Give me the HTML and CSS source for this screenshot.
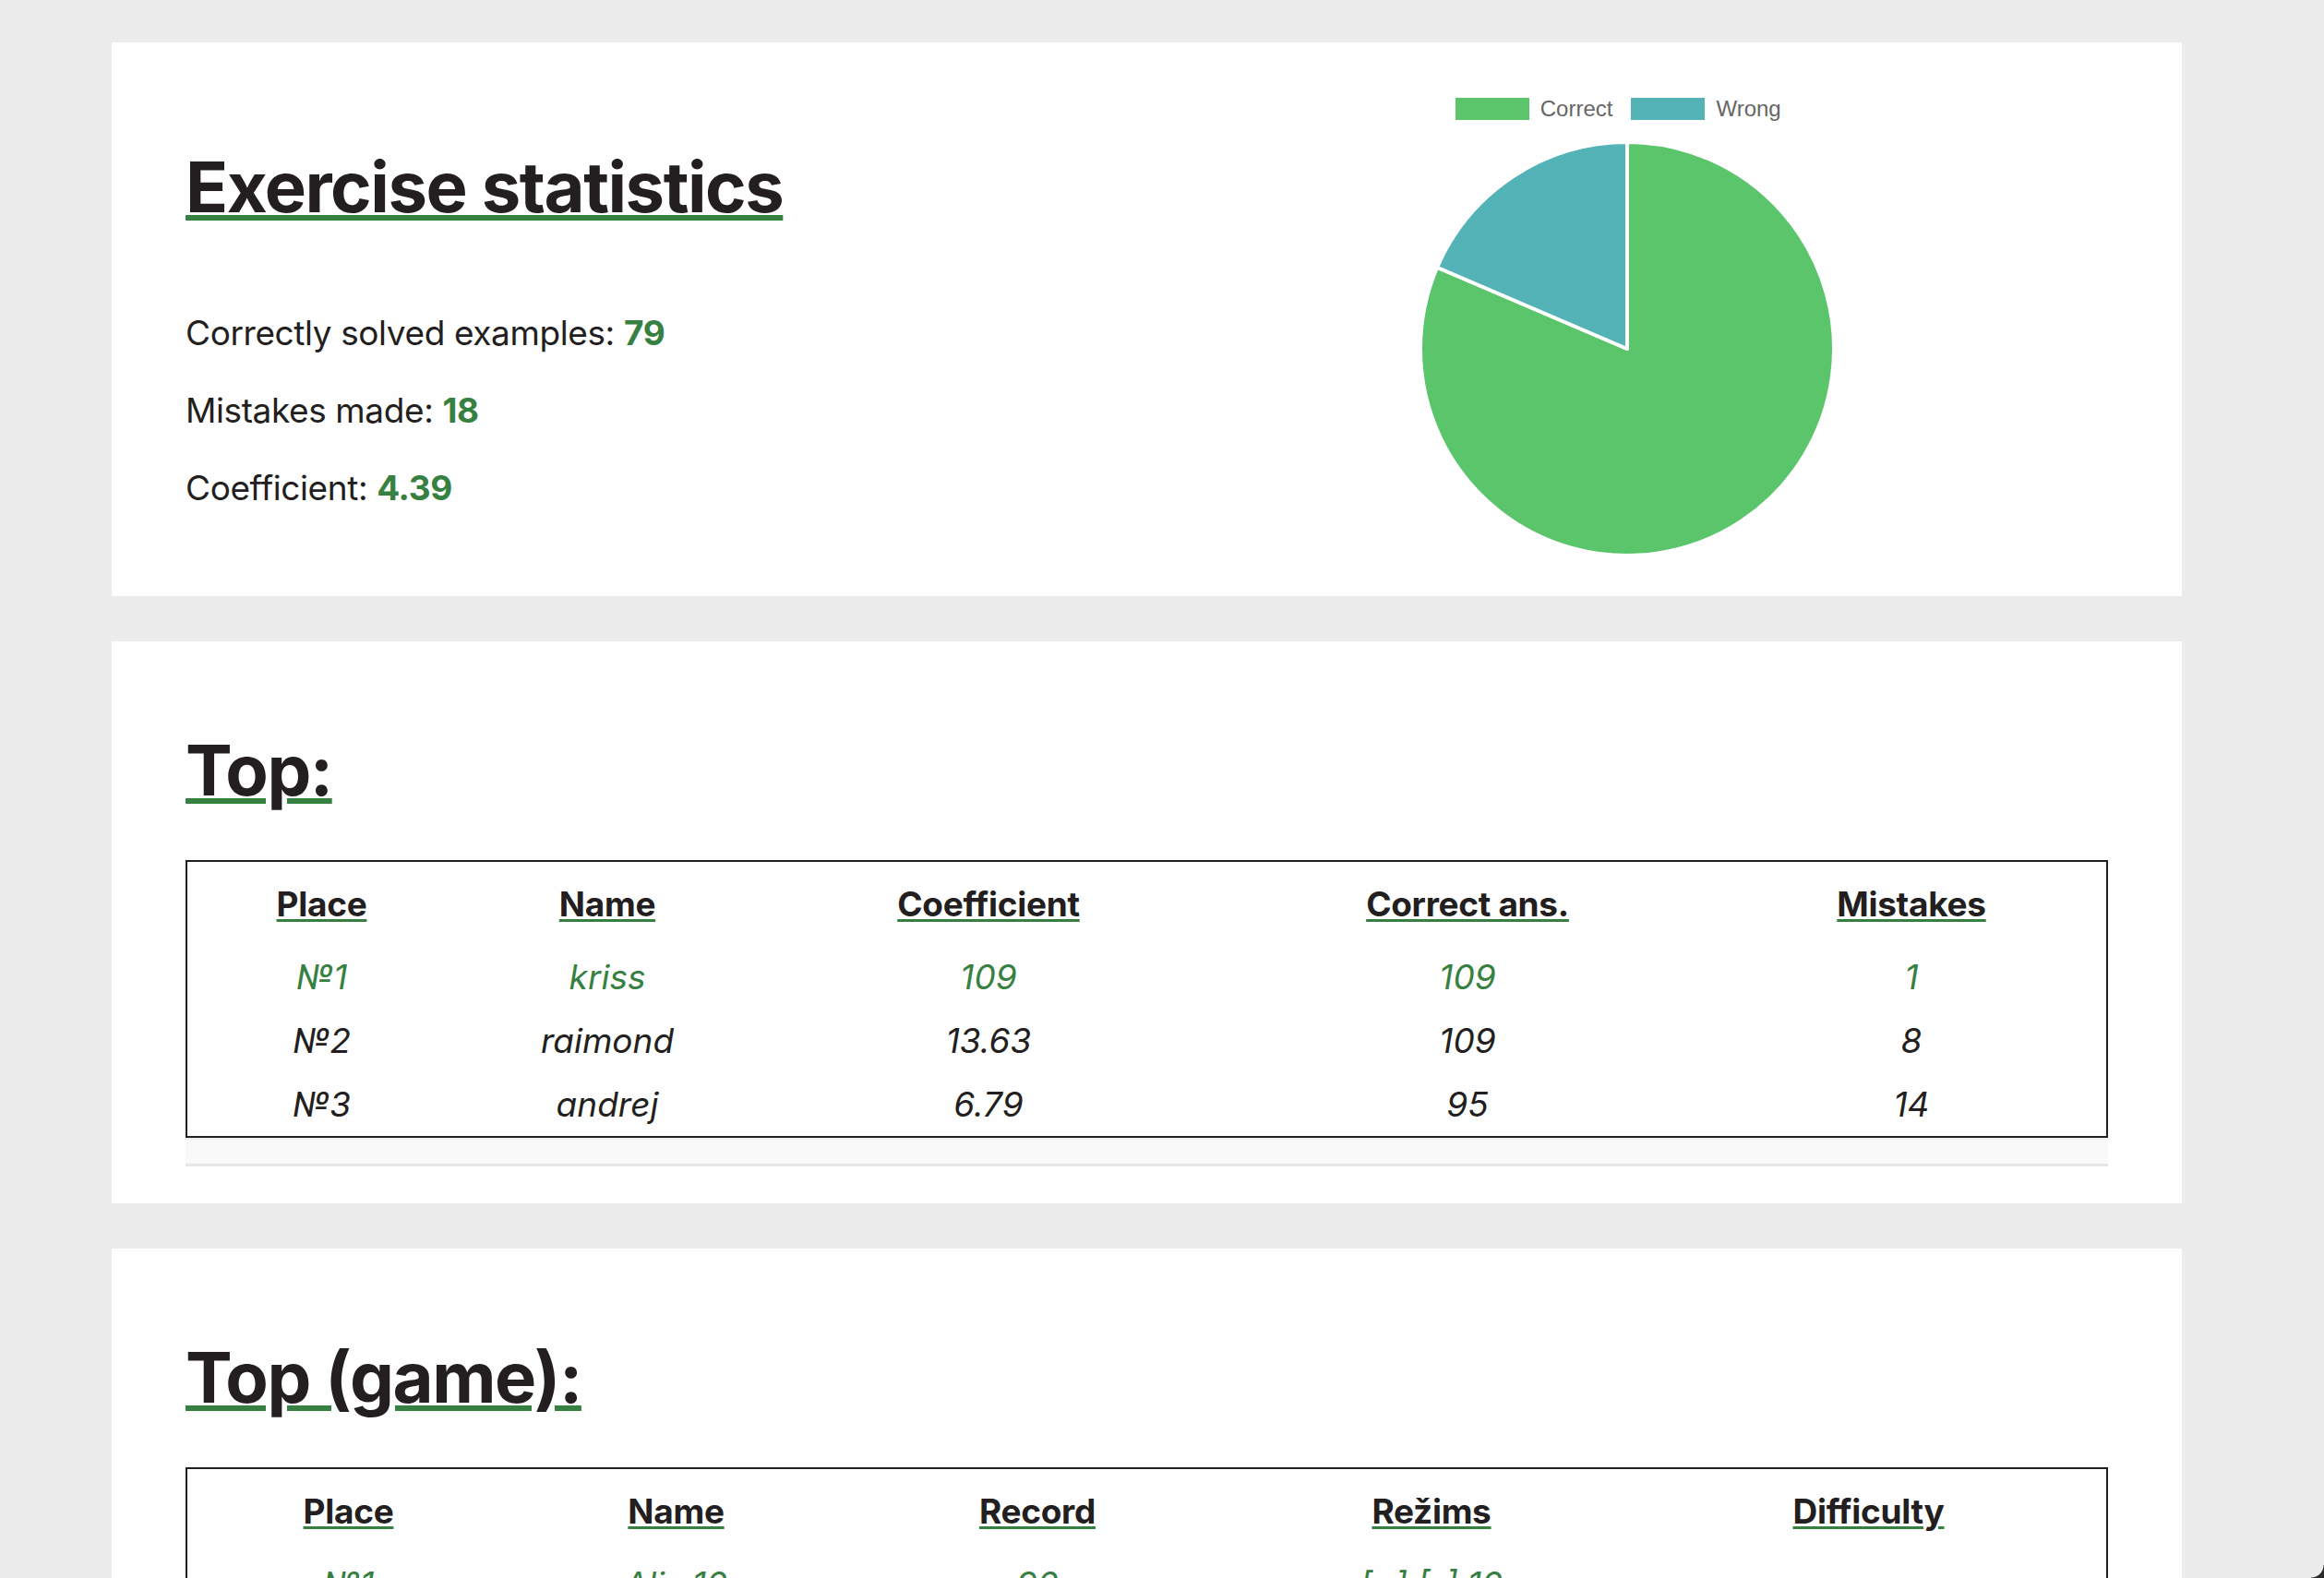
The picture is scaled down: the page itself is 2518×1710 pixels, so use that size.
FILE: index.html
```html
<!DOCTYPE html>
<html lang="en">
<head>
<meta charset="utf-8">
<title>Exercise statistics</title>
<link rel="stylesheet" href="styles.css">
</head>
<body>
<main class="page">
  <section class="card">
    <div class="stats">
      <div class="stats-text">
        <h1 class="heading heading-first">Exercise statistics</h1>
        <p class="stat">Correctly solved examples: <b>79</b></p>
        <p class="stat">Mistakes made: <b>18</b></p>
        <p class="stat">Coefficient: <b>4.39</b></p>
      </div>
      <div class="chart">
        <div class="legend">
          <div class="legend-item"><span class="swatch swatch-correct"></span>Correct</div>
          <div class="legend-item"><span class="swatch swatch-wrong"></span>Wrong</div>
        </div>
        <div class="pie-wrap">
          <svg class="pie" width="456" height="456" viewBox="0 0 456 456">
            <path class="slice-correct" d="M228,228 L228,4 A224,224 0 1 1 22.11,139.76 Z"/>
            <path class="slice-wrong" d="M228,228 L22.11,139.76 A224,224 0 0 1 228,4 Z"/>
          </svg>
        </div>
      </div>
    </div>
  </section>

  <section class="card">
    <h1 class="heading">Top:</h1>
    <div class="table-wrap">
      <table class="top-table">
        <colgroup>
          <col class="t1c1"><col class="t1c2"><col class="t1c3"><col class="t1c4"><col class="t1c5">
        </colgroup>
        <thead>
          <tr><th><span>Place</span></th><th><span>Name</span></th><th><span>Coefficient</span></th><th><span>Correct ans.</span></th><th><span>Mistakes</span></th></tr>
        </thead>
        <tbody>
          <tr class="first"><td>№1</td><td>kriss</td><td>109</td><td>109</td><td>1</td></tr>
          <tr><td>№2</td><td>raimond</td><td>13.63</td><td>109</td><td>8</td></tr>
          <tr><td>№3</td><td>andrej</td><td>6.79</td><td>95</td><td>14</td></tr>
        </tbody>
      </table>
      <div class="scroll-track"></div>
    </div>
  </section>

  <section class="card">
    <h1 class="heading">Top (game):</h1>
    <div class="table-wrap">
      <table class="top-table">
        <colgroup>
          <col class="t2c1"><col class="t2c2"><col class="t2c3"><col class="t2c4"><col class="t2c5">
        </colgroup>
        <thead>
          <tr><th><span>Place</span></th><th><span>Name</span></th><th><span>Record</span></th><th><span>Režims</span></th><th><span>Difficulty</span></th></tr>
        </thead>
        <tbody>
          <tr class="first"><td>№1</td><td>Alis 10</td><td>90</td><td>[+] [-] 10</td><td></td></tr>
          <tr><td>№2</td><td>raimond</td><td>64</td><td>[+] [-] 10</td><td></td></tr>
          <tr><td>№3</td><td>kriss</td><td>51</td><td>[+] [-] 10</td><td></td></tr>
        </tbody>
      </table>
      <div class="scroll-track"></div>
    </div>
  </section>
</main>
<div class="window-corner"></div>
</body>
</html>
```

FILE: styles.css
```css
html, body {
  margin: 0;
  padding: 0;
}

body {
  background: #ececec;
  font-family: Inter, "Noto Sans", sans-serif;
  color: #231f20;
}

.page {
  display: flex;
  flex-direction: column;
  gap: 49px;
  padding: 46px 154px 80px 121px;
}

.card {
  background: #fefefe;
  padding: 40px 80px;
}

.heading {
  font-size: 76px;
  line-height: 92px;
  font-weight: 700;
  letter-spacing: -1.5px;
  margin: 53px 0 52px;
  text-decoration: underline;
  text-decoration-color: #368042;
  text-decoration-thickness: 6px;
  text-underline-offset: 3px;
  align-self: flex-start;
}

/* first card */
.stats {
  display: grid;
  grid-template-columns: 1fr 1fr;
}

.stats-text {
  display: flex;
  flex-direction: column;
  align-items: flex-start;
}

.heading-first {
  margin: 70px 0 86px;
}

.stat {
  font-size: 37px;
  line-height: 54px;
  letter-spacing: -0.4px;
  margin: 0 0 30px;
}

.stat b {
  color: #368042;
  font-weight: 700;
}

.chart {
  height: 520px;
  display: flex;
  flex-direction: column;
}

.legend {
  display: flex;
  justify-content: center;
  padding-top: 20px;
  height: 24px;
  margin-bottom: 20px;
}

.legend-item {
  display: flex;
  align-items: center;
  margin-right: 20px;
  font-family: "Liberation Sans", Arial, sans-serif;
  font-size: 24px;
  line-height: 24px;
  color: #666666;
}

.swatch {
  display: block;
  width: 80px;
  height: 24px;
  margin-right: 12px;
}

.swatch-correct { background: #5bc56b; }
.swatch-wrong { background: #53b3b7; }

.pie-wrap {
  display: flex;
  justify-content: center;
}

.pie path {
  stroke: #ffffff;
  stroke-width: 4;
  stroke-linejoin: round;
}

.slice-correct { fill: #5bc56b; }
.slice-wrong { fill: #53b3b7; }

/* tables */
.table-wrap {
  display: flex;
  flex-direction: column;
}

.top-table {
  width: 100%;
  table-layout: fixed;
  border-collapse: separate;
  border-spacing: 0;
  border: 2px solid #231f20;
  font-size: 37px;
  line-height: 45px;
}

.top-table th {
  font-weight: 700;
  text-align: center;
  padding: 23px 0 22px;
  letter-spacing: -0.3px;
}

.top-table th span {
  text-decoration: underline;
  text-decoration-color: #368042;
  text-decoration-thickness: 3px;
  text-underline-offset: 3px;
}

.top-table td {
  text-align: center;
  font-style: italic;
  padding: 12px 0;
  white-space: nowrap;
}

.top-table tbody tr:last-child td {
  padding-bottom: 12px;
}

.top-table tr.first td {
  color: #368042;
}

.t1c1 { width: 291px; }
.t1c2 { width: 328px; }
.t1c3 { width: 498px; }
.t1c4 { width: 540px; }
.t1c5 { width: 422px; }

.t2c1 { width: 349px; }
.t2c2 { width: 361px; }
.t2c3 { width: 422px; }
.t2c4 { width: 432px; }
.t2c5 { width: 515px; }

.scroll-track {
  height: 26px;
  background: #f9f9f9;
  border-top: 2px solid #efefef;
  border-bottom: 3px solid #e6e6e6;
}

.window-corner {
  position: fixed;
  right: 0;
  bottom: 0;
  width: 14px;
  height: 14px;
  background: radial-gradient(circle at 0 0, rgba(236,236,236,0) 13px, #2a2a2a 14px);
}
```
